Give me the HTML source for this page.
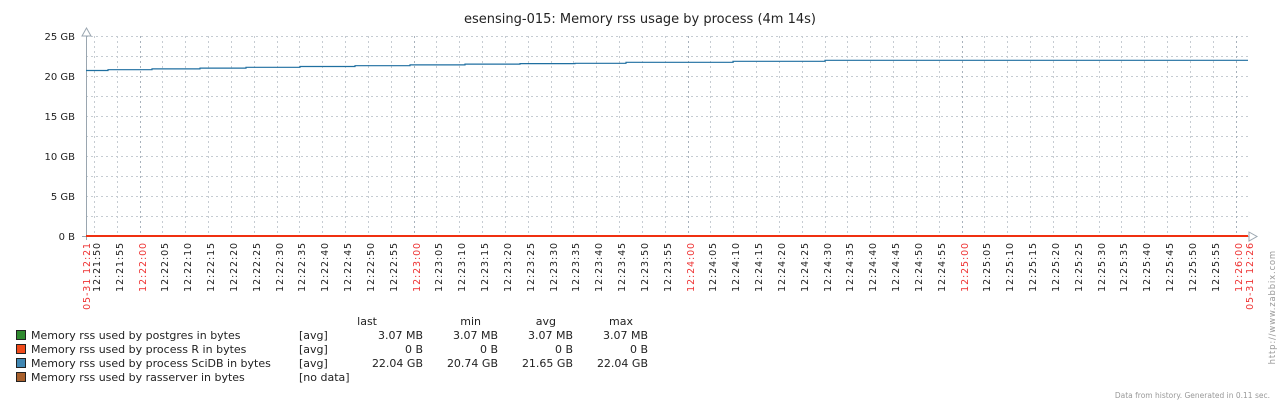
<!DOCTYPE html>
<html><head><meta charset="utf-8"><style>
html,body{margin:0;padding:0;background:#fff;width:1279px;height:404px;overflow:hidden}
svg{display:block;font-family:"DejaVu Sans","Liberation Sans",sans-serif}
.t text{font-size:9.5px;fill:#222;letter-spacing:0.9px}
.t text.r{fill:#e33}
.lg{font-size:11px;fill:#222}
</style></head><body>
<svg width="1279" height="404" viewBox="0 0 1279 404">
<text x="640" y="23" text-anchor="middle" font-size="13" fill="#222">esensing-015: Memory rss usage by process (4m 14s)</text>
<g stroke="#c6ccd2" stroke-width="1" stroke-dasharray="2,3">
<line x1="86" y1="36.5" x2="1248" y2="36.5"/><line x1="86" y1="56.5" x2="1248" y2="56.5"/>
<line x1="86" y1="76.5" x2="1248" y2="76.5"/><line x1="86" y1="96.5" x2="1248" y2="96.5"/>
<line x1="86" y1="116.5" x2="1248" y2="116.5"/><line x1="86" y1="136.5" x2="1248" y2="136.5"/>
<line x1="86" y1="156.5" x2="1248" y2="156.5"/><line x1="86" y1="176.5" x2="1248" y2="176.5"/>
<line x1="86" y1="196.5" x2="1248" y2="196.5"/><line x1="86" y1="216.5" x2="1248" y2="216.5"/>
</g>
<g stroke="#c6ccd2" stroke-width="1" stroke-dasharray="2,3">
<path d="M94.5 36V236M117.5 36V236M162.5 36V236M185.5 36V236M208.5 36V236M231.5 36V236M254.5 36V236M277.5 36V236M299.5 36V236M322.5 36V236M345.5 36V236M368.5 36V236M391.5 36V236M436.5 36V236M459.5 36V236M482.5 36V236M505.5 36V236M528.5 36V236M551.5 36V236M573.5 36V236M596.5 36V236M619.5 36V236M642.5 36V236M665.5 36V236M710.5 36V236M733.5 36V236M756.5 36V236M779.5 36V236M802.5 36V236M825.5 36V236M847.5 36V236M870.5 36V236M893.5 36V236M916.5 36V236M939.5 36V236M984.5 36V236M1007.5 36V236M1030.5 36V236M1053.5 36V236M1076.5 36V236M1099.5 36V236M1121.5 36V236M1144.5 36V236M1167.5 36V236M1190.5 36V236M1213.5 36V236"/>
</g>
<g stroke="#a8b2bc" stroke-width="1" stroke-dasharray="2,3">
<path d="M140.5 36V236M414.5 36V236M688.5 36V236M962.5 36V236M1236.5 36V236"/>
</g>
<g fill="#222" font-size="10" text-anchor="end">
<text x="75" y="40">25 GB</text><text x="75" y="80">20 GB</text><text x="75" y="120">15 GB</text>
<text x="75" y="160">10 GB</text><text x="75" y="200">5 GB</text><text x="75" y="240">0 B</text>
</g>
<g stroke="#9aa6b0" stroke-width="1" fill="none">
<path d="M86.5 30V240"/><path d="M82 36L86.5 28L91 36Z" fill="#fff"/>
<path d="M82 236.5H1256"/><path d="M1249 232L1257 236.5L1249 241Z" fill="#fff"/>
</g>
<polyline fill="none" stroke="#1f6fa0" stroke-width="1.2" points="86,70.5 108,70.5 108,69.7 152,69.7 152,68.9 200,68.9 200,68.1 246,68.1 246,67.3 300,67.3 300,66.5 355,66.5 355,65.7 410,65.7 410,64.9 465,64.9 465,64.1 520,64.1 520,63.6 575,63.6 575,63.3 626,63.3 626,62.3 733,62.3 733,61.3 825,61.3 825,60.3 1248,60.3"/>
<line x1="86" y1="236" x2="1248" y2="236" stroke="#f03010" stroke-width="2"/>
<g class="t" text-anchor="end">
<text class="r" transform="translate(90,242) rotate(-90)">05-31 12:21</text>
<text transform="translate(100,242) rotate(-90)">12:21:50</text>
<text transform="translate(123,242) rotate(-90)">12:21:55</text>
<text class="r" transform="translate(146,242) rotate(-90)">12:22:00</text>
<text transform="translate(168,242) rotate(-90)">12:22:05</text>
<text transform="translate(191,242) rotate(-90)">12:22:10</text>
<text transform="translate(214,242) rotate(-90)">12:22:15</text>
<text transform="translate(237,242) rotate(-90)">12:22:20</text>
<text transform="translate(260,242) rotate(-90)">12:22:25</text>
<text transform="translate(283,242) rotate(-90)">12:22:30</text>
<text transform="translate(305,242) rotate(-90)">12:22:35</text>
<text transform="translate(328,242) rotate(-90)">12:22:40</text>
<text transform="translate(351,242) rotate(-90)">12:22:45</text>
<text transform="translate(374,242) rotate(-90)">12:22:50</text>
<text transform="translate(397,242) rotate(-90)">12:22:55</text>
<text class="r" transform="translate(420,242) rotate(-90)">12:23:00</text>
<text transform="translate(442,242) rotate(-90)">12:23:05</text>
<text transform="translate(465,242) rotate(-90)">12:23:10</text>
<text transform="translate(488,242) rotate(-90)">12:23:15</text>
<text transform="translate(511,242) rotate(-90)">12:23:20</text>
<text transform="translate(534,242) rotate(-90)">12:23:25</text>
<text transform="translate(557,242) rotate(-90)">12:23:30</text>
<text transform="translate(579,242) rotate(-90)">12:23:35</text>
<text transform="translate(602,242) rotate(-90)">12:23:40</text>
<text transform="translate(625,242) rotate(-90)">12:23:45</text>
<text transform="translate(648,242) rotate(-90)">12:23:50</text>
<text transform="translate(671,242) rotate(-90)">12:23:55</text>
<text class="r" transform="translate(694,242) rotate(-90)">12:24:00</text>
<text transform="translate(716,242) rotate(-90)">12:24:05</text>
<text transform="translate(739,242) rotate(-90)">12:24:10</text>
<text transform="translate(762,242) rotate(-90)">12:24:15</text>
<text transform="translate(785,242) rotate(-90)">12:24:20</text>
<text transform="translate(808,242) rotate(-90)">12:24:25</text>
<text transform="translate(831,242) rotate(-90)">12:24:30</text>
<text transform="translate(853,242) rotate(-90)">12:24:35</text>
<text transform="translate(876,242) rotate(-90)">12:24:40</text>
<text transform="translate(899,242) rotate(-90)">12:24:45</text>
<text transform="translate(922,242) rotate(-90)">12:24:50</text>
<text transform="translate(945,242) rotate(-90)">12:24:55</text>
<text class="r" transform="translate(968,242) rotate(-90)">12:25:00</text>
<text transform="translate(990,242) rotate(-90)">12:25:05</text>
<text transform="translate(1013,242) rotate(-90)">12:25:10</text>
<text transform="translate(1036,242) rotate(-90)">12:25:15</text>
<text transform="translate(1059,242) rotate(-90)">12:25:20</text>
<text transform="translate(1082,242) rotate(-90)">12:25:25</text>
<text transform="translate(1105,242) rotate(-90)">12:25:30</text>
<text transform="translate(1127,242) rotate(-90)">12:25:35</text>
<text transform="translate(1150,242) rotate(-90)">12:25:40</text>
<text transform="translate(1173,242) rotate(-90)">12:25:45</text>
<text transform="translate(1196,242) rotate(-90)">12:25:50</text>
<text transform="translate(1219,242) rotate(-90)">12:25:55</text>
<text class="r" transform="translate(1242,242) rotate(-90)">12:26:00</text>
<text class="r" transform="translate(1253,242) rotate(-90)">05-31 12:26</text>
</g>
<text transform="translate(1275,250) rotate(-90)" text-anchor="end" font-size="8.5" fill="#999" letter-spacing="0.8">http://www.zabbix.com</text>
<g stroke="#222" stroke-width="1">
<rect x="16.5" y="330.5" width="9" height="9" fill="#2f8a2f"/>
<rect x="16.5" y="344.5" width="9" height="9" fill="#f04a1a"/>
<rect x="16.5" y="358.5" width="9" height="9" fill="#3f86b2"/>
<rect x="16.5" y="372.5" width="9" height="9" fill="#a8602c"/>
</g>
<g class="lg">
<text x="31" y="339">Memory rss used by postgres in bytes</text>
<text x="31" y="353">Memory rss used by process R in bytes</text>
<text x="31" y="367">Memory rss used by process SciDB in bytes</text>
<text x="31" y="381">Memory rss used by rasserver in bytes</text>
<text x="299" y="339">[avg]</text><text x="299" y="353">[avg]</text><text x="299" y="367">[avg]</text><text x="299" y="381">[no data]</text>
</g>
<g class="lg" text-anchor="end">
<text x="377" y="325">last</text><text x="481" y="325">min</text><text x="556" y="325">avg</text><text x="633" y="325">max</text>
<text x="423" y="339">3.07 MB</text><text x="498" y="339">3.07 MB</text><text x="573" y="339">3.07 MB</text><text x="648" y="339">3.07 MB</text>
<text x="423" y="353">0 B</text><text x="498" y="353">0 B</text><text x="573" y="353">0 B</text><text x="648" y="353">0 B</text>
<text x="423" y="367">22.04 GB</text><text x="498" y="367">20.74 GB</text><text x="573" y="367">21.65 GB</text><text x="648" y="367">22.04 GB</text>
</g>
<text x="1270" y="398" text-anchor="end" font-size="7.5" fill="#999">Data from history. Generated in 0.11 sec.</text>
</svg>
</body></html>
